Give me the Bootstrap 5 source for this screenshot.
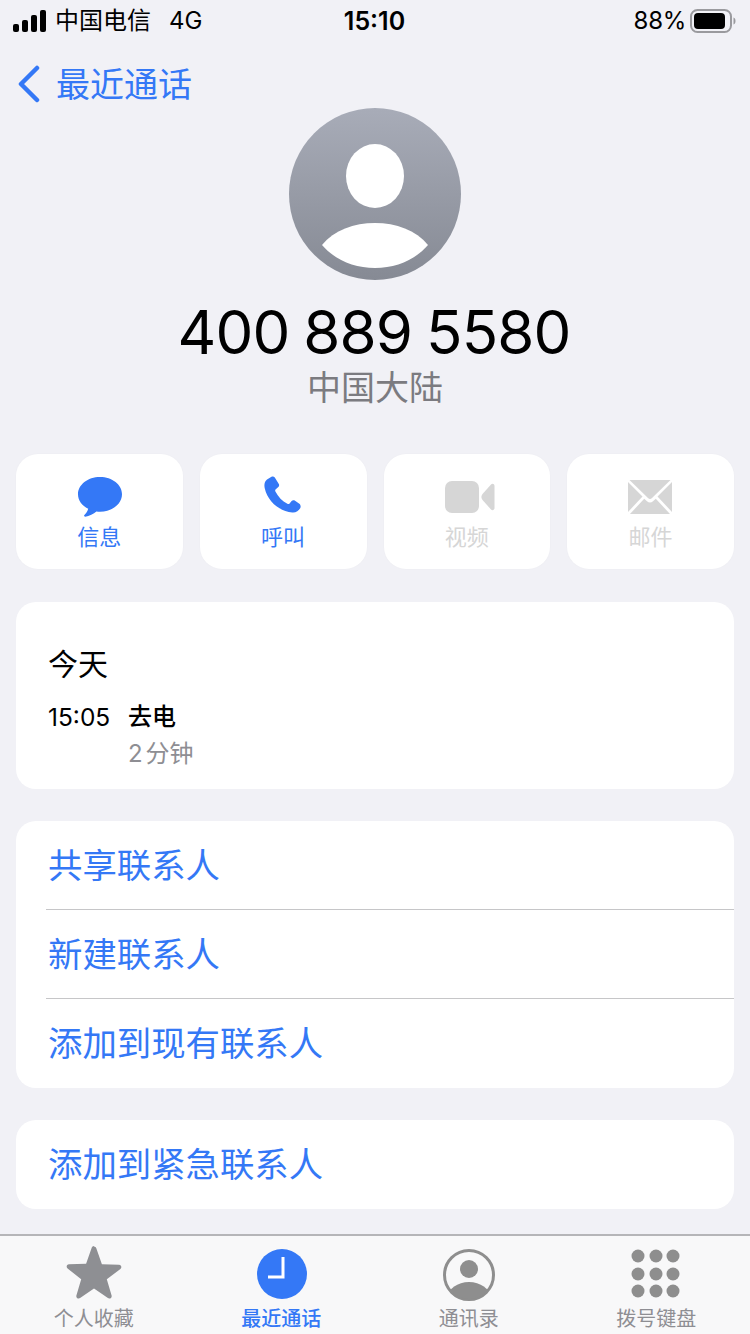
<!DOCTYPE html>
<html lang="zh-CN">
<head>
    <meta charset="UTF-8" />
    <meta name="viewport" content="width=device-width, initial-scale=1.0" />
    <title>最近通话</title>
    <link href="https://cdn.jsdelivr.net/npm/bootstrap@5.3.3/dist/css/bootstrap.min.css" rel="stylesheet">
    <style>
        body {
            background-color: #f1f1f6;
            font-family: Inter, "Noto Sans CJK SC", sans-serif;
            color: #000;
            width: 750px;
            height: 1334px;
            overflow: hidden;
        }

        .phone-page {
            height: 1334px;
        }

        .status-bar {
            height: 42px;
            padding: 0 14px 0 13px;
            font-size: 24px;
            line-height: 42px;
        }

        .status-side {
            width: 300px;
        }

        .status-time {
            font-weight: 600;
            font-size: 25px;
        }

        .status-net {
            margin-left: 18px;
        }

        .status-pct {
            margin-right: 4px;
            letter-spacing: -0.3px;
        }

        .back-row {
            height: 66px;
            padding: 18px 0 0 17px;
            color: #3478f6;
            font-size: 34px;
        }

        .back-arrow {
            margin-right: 15px;
        }

        .avatar-pic {
            display: block;
            margin: 0 auto;
        }

        .phone-number {
            font-size: 60px;
            line-height: 70px;
            margin-top: 17px;
            padding-right: 2px;
            letter-spacing: -0.9px;
            word-spacing: -2px;
        }

        .phone-region {
            font-size: 34px;
            line-height: 42px;
            color: #7b7b80;
        }

        .action-row {
            margin: 45px 16px 0;
            gap: 17px;
        }

        .action-tile {
            width: 167px;
            height: 115px;
            border-radius: 22px;
            background: #fff;
            color: #3478f6;
            font-size: 22px;
            line-height: 28px;
            padding-top: 22px;
            box-shadow: 0 0 2px rgba(0, 0, 0, 0.03);
        }

        .action-tile.is-off {
            color: #d6d6d6;
        }

        .action-icon {
            height: 42px;
            margin-bottom: 5px;
        }

        .nudge-left {
            margin-left: -2px;
        }

        .nudge-right {
            margin-left: 2px;
        }

        .nudge-video {
            margin-left: 6px;
        }

        .panel-box {
            background: #fff;
            border-radius: 20px;
            margin: 32px 16px 0;
        }

        .call-box {
            height: 187px;
            margin-top: 33px;
            padding: 43px 32px 0;
        }

        .call-day {
            font-size: 30px;
            line-height: 38px;
        }

        .call-time {
            font-size: 24.500px;
            line-height: 32px;
            width: 80px;
        }

        .call-line {
            margin-top: 18px;
        }

        .call-kind {
            font-size: 24px;
            line-height: 32px;
            font-weight: 500;
        }

        .call-length {
            font-size: 24px;
            line-height: 32px;
            color: #8e8e93;
            padding-left: 80px;
            margin-top: 5px;
            word-spacing: -4px;
        }

        .action-link {
            height: 88px;
            font-size: 34.400px;
            line-height: 90px;
            color: #3478f6;
            padding-left: 32px;
        }

        .action-link.is-tall {
            height: 89px;
        }

        .link-rule {
            border-top: 1px solid #c6c6c8;
            margin-left: 30px;
        }

        .tab-strip {
            margin-top: auto;
            height: 100px;
            background: #f8f8f9;
            border-top: 2px solid #b5b5b8;
        }

        .tab-cell {
            width: 187.5px;
            color: #8e8e93;
            font-size: 20px;
            line-height: 26px;
            padding-top: 9px;
        }

        .tab-cell.is-on {
            color: #3478f6;
            font-weight: 500;
        }

        .tab-icon {
            height: 56px;
            margin-bottom: 5px;
        }
    </style>
</head>
<body>
    <div class="phone-page d-flex flex-column">
        <!-- status bar -->
        <div class="status-bar d-flex justify-content-between align-items-center">
            <div class="status-side d-flex align-items-center">
                <svg width="34" height="22" viewBox="0 0 34 22" class="me-2"><rect x="0" y="14" width="6" height="8" rx="2"/><rect x="9" y="10" width="6" height="12" rx="2"/><rect x="18" y="5" width="6" height="17" rx="2"/><rect x="27" y="0" width="6" height="22" rx="2"/></svg>
                <span>中国电信</span>
                <span class="status-net">4G</span>
            </div>
            <div class="status-time">15:10</div>
            <div class="status-side d-flex align-items-center justify-content-end">
                <span class="status-pct">88%</span>
                <svg width="46" height="24" viewBox="0 0 46 24"><rect x="1" y="1" width="40" height="22" rx="6.5" fill="none" stroke="#9a9a9e" stroke-width="2"/><rect x="4" y="4" width="31" height="16" rx="4"/><path d="M43.5 8.5c1.4.6 2 1.8 2 3.5s-.6 2.900-2 3.500z" fill="#9a9a9e"/></svg>
            </div>
        </div>

        <!-- back link -->
        <div class="back-row d-flex align-items-center">
            <svg width="24" height="38" viewBox="0 0 24 38" class="back-arrow"><path d="M20 3 4 19l16 16" fill="none" stroke="#3478f6" stroke-width="4.500" stroke-linecap="round" stroke-linejoin="round"/></svg>
            <span>最近通话</span>
        </div>

        <!-- caller -->
        <svg class="avatar-pic" width="172" height="172" viewBox="0 0 172 172">
            <defs>
                <linearGradient id="avatarFill" x1="0" y1="0" x2="0" y2="1">
                    <stop offset="0" stop-color="#a8acb8"/>
                    <stop offset="1" stop-color="#868a94"/>
                </linearGradient>
            </defs>
            <circle cx="86" cy="86" r="86" fill="url(#avatarFill)"/>
            <ellipse cx="86" cy="68" rx="29" ry="32" fill="#fff"/>
            <path d="M33 137C45 122 65 115 86 115s41 7 53 22c-13 15-32 23-53 23s-40-8-53-23z" fill="#fff"/>
        </svg>
        <div class="phone-number text-center">400 889 5580</div>
        <div class="phone-region text-center">中国大陆</div>

        <!-- actions -->
        <div class="action-row d-flex">
            <div class="action-tile text-center">
                <div class="action-icon">
                    <svg width="46" height="42" viewBox="0 0 46 42" class="nudge-right"><path d="M23 1C10.800 1 1 8.800 1 18.300c0 6.200 4 11.500 10.200 14.500-.5 2.400-2.300 4.800-3.800 6.300-.7.700-.2 1.700.8 1.600 4.100-.5 8.400-2.700 11.200-5.200 1.200.2 2.400.2 3.600.2 12.200 0 22-7.700 22-17.400S35.200 1 23 1z" fill="#3478f6"/></svg>
                </div>
                信息
            </div>
            <div class="action-tile text-center">
                <div class="action-icon">
                    <svg width="38" height="40" viewBox="0 0 38 40"><path d="M3 3.500 7.500.8c1.200-.7 2.600-.3 3.300.8l4 6.500c.6 1 .4 2.300-.5 3l-2.500 2.200c-.7.600-.8 1.400-.4 2.200 2.900 5.500 6.700 9.500 12 12.300.8.400 1.600.3 2.200-.4l2-2.400c.8-.9 2.100-1.100 3.100-.4l4.300 2.900c1.500 1 2.100 2.900 1.300 4.500-1.500 3-4.800 4.900-8 4.500C14.500 35 3.600 24.800.8 12.500-.1 9 .5 5.300 3 3.500z" fill="#3478f6"/></svg>
                </div>
                呼叫
            </div>
            <div class="action-tile is-off text-center">
                <div class="action-icon">
                    <svg width="50" height="34" viewBox="0 0 50 34" class="mt-1 nudge-video"><rect x="0" y="1" width="34" height="32" rx="7" fill="#d6d6d6"/><path d="M37.500 14 46 4.500c1.300-1.400 3.500-.5 3.500 1.400v22.200c0 1.900-2.200 2.800-3.500 1.400L37.500 20c-1.500-1.700-1.500-4.300 0-6z" fill="#d6d6d6"/></svg>
                </div>
                视频
            </div>
            <div class="action-tile is-off text-center">
                <div class="action-icon">
                    <svg width="44" height="34" viewBox="0 0 44 34" class="mt-1 nudge-left"><path d="M1.500 0h41L24 18c-1.200 1.200-2.800 1.200-4 0z" fill="#d6d6d6"/><path d="M0 2v30l14.500-15.500zM44 2v30L29.500 16.500zM2 34h40L27.800 18.800 25 21.300c-1.800 1.600-4.200 1.600-6 0l-2.800-2.500z" fill="#d6d6d6"/></svg>
                </div>
                邮件
            </div>
        </div>

        <!-- call detail -->
        <div class="panel-box call-box">
            <div class="call-day">今天</div>
            <div class="call-line d-flex">
                <div class="call-time">15:05</div>
                <div class="call-kind">去电</div>
            </div>
            <div class="call-length">2 分钟</div>
        </div>

        <!-- contact links -->
        <div class="panel-box">
            <div class="action-link">共享联系人</div>
            <div class="link-rule"></div>
            <div class="action-link">新建联系人</div>
            <div class="link-rule"></div>
            <div class="action-link is-tall">添加到现有联系人</div>
        </div>

        <div class="panel-box">
            <div class="action-link is-tall">添加到紧急联系人</div>
        </div>

        <!-- tab bar -->
        <div class="tab-strip d-flex">
            <div class="tab-cell text-center">
                <div class="tab-icon">
                    <svg width="56" height="54" viewBox="0 0 56 54"><path d="M28 1.500c1.100 0 1.900.7 2.300 1.800l5.600 15.900 17.100.5c2.300.1 3.200 2.900 1.400 4.300L40.800 34.300l4.800 16.200c.6 2.200-1.800 3.900-3.700 2.600L28 43.500 14.100 53.100c-1.900 1.300-4.300-.4-3.700-2.600l4.800-16.200L1.600 23.500c-1.800-1.400-.9-4.200 1.400-4.300l17.100-.5 5.600-15.900c.4-1.100 1.200-1.800 2.300-1.800z" fill="#8e8f93"/></svg>
                </div>
                个人收藏
            </div>
            <div class="tab-cell is-on text-center">
                <div class="tab-icon">
                    <svg width="50" height="50" viewBox="0 0 50 50" class="mt-1 nudge-right"><circle cx="25" cy="25" r="25" fill="#3478f6"/><path d="M26 8v20H11" fill="none" stroke="#fff" stroke-width="3"/></svg>
                </div>
                最近通话
            </div>
            <div class="tab-cell text-center">
                <div class="tab-icon">
                    <svg width="52" height="52" viewBox="0 0 52 52" class="mt-1"><defs><clipPath id="tabRound"><circle cx="26" cy="26" r="24"/></clipPath></defs><circle cx="26" cy="26" r="24.500" fill="none" stroke="#8e8e8e" stroke-width="3"/><circle cx="26" cy="20" r="9" fill="#8e8e8e"/><ellipse cx="26" cy="48" rx="21" ry="15" fill="#8e8e8e" clip-path="url(#tabRound)"/></svg>
                </div>
                通讯录
            </div>
            <div class="tab-cell text-center">
                <div class="tab-icon">
                    <svg width="50" height="50" viewBox="0 0 50 50" class="mt-1" fill="#8e8e8e"><circle cx="7" cy="7" r="6.500"/><circle cx="25" cy="7" r="6.500"/><circle cx="42" cy="7" r="6.500"/><circle cx="7" cy="25" r="6.500"/><circle cx="25" cy="25" r="6.500"/><circle cx="42" cy="25" r="6.500"/><circle cx="7" cy="42" r="6.500"/><circle cx="25" cy="42" r="6.500"/><circle cx="42" cy="42" r="6.500"/></svg>
                </div>
                拨号键盘
            </div>
        </div>
    </div>
    <script src="https://cdn.jsdelivr.net/npm/bootstrap@5.3.3/dist/js/bootstrap.bundle.min.js"></script>
</body>
</html>
